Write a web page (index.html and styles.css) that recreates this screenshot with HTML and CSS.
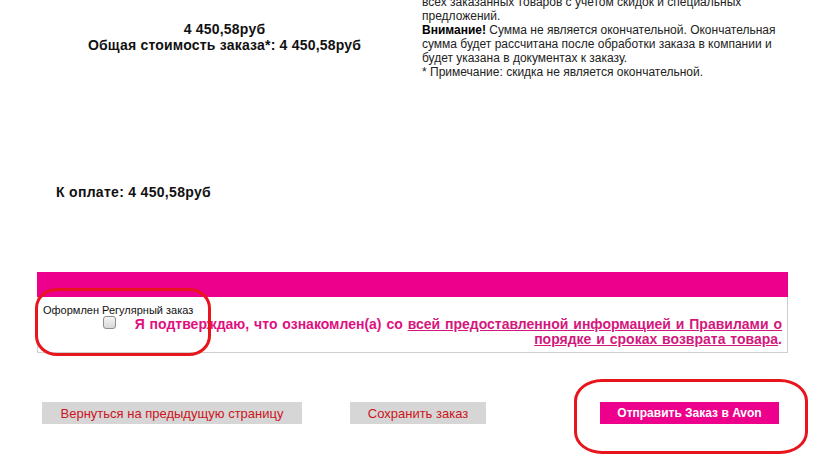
FILE: index.html
```html
<!DOCTYPE html>
<html lang="ru">
<head>
    <meta charset="UTF-8">
    <title>Оформление заказа</title>
    <link rel="stylesheet" href="styles.css">
</head>
<body>
    <div class="order">
        <div class="summary">
            <div class="summary-total">
                <div>4 450,58руб</div>
                <div>Общая стоимость заказа*: 4 450,58руб</div>
            </div>
            <div class="summary-note">
                всех заказанных товаров с учетом скидок и специальных предложений.<br>
                <b>Внимание!</b> Сумма не является окончательной. Окончательная сумма будет рассчитана после обработки заказа в компании и будет указана в документах к заказу.<br>
                * Примечание: скидка не является окончательной.
            </div>
        </div>

        <div class="to-pay">К оплате: 4 450,58руб</div>

        <div class="confirm-bar"></div>
        <div class="confirm-box">
            <div class="regular-label">Оформлен Регулярный заказ</div>
            <div class="confirm-row">
                <input type="checkbox" class="confirm-check" id="agree">
                <label for="agree" class="confirm-text">
                    Я подтверждаю, что ознакомлен(а) со <a href="#">всей предоставленной информацией и Правилами о порядке и сроках возврата товара</a>.
                </label>
            </div>
        </div>

        <div class="actions">
            <button class="btn btn-back">Вернуться на предыдущую страницу</button>
            <button class="btn btn-save">Сохранить заказ</button>
            <button class="btn btn-send">Отправить Заказ в Avon</button>
        </div>
    </div>

    <!-- red marker outlines drawn over the screenshot -->
    <div class="mark mark-regular"></div>
    <div class="mark mark-send"></div>
</body>
</html>
```

FILE: styles.css
```css
body {
    margin: 0;
    background: #fff;
    font-family: "Liberation Sans", Arial, sans-serif;
    color: #111;
    overflow: hidden;
}

.order {
    margin-left: 37px;
    width: 751px;
}

.summary {
    display: flex;
    align-items: center;
    margin-top: -5px;
}

.summary-total {
    width: 375px;
    text-align: center;
    font-size: 14px;
    line-height: 16px;
    font-weight: bold;
    letter-spacing: 0.2px;
}

.summary-note {
    width: 362px;
    padding-left: 10px;
    font-size: 12px;
    line-height: 14px;
    color: #222;
}

.summary-note b {
    color: #000;
}

.to-pay {
    margin-top: 105px;
    padding-left: 19px;
    font-size: 14px;
    line-height: 16px;
    font-weight: bold;
    letter-spacing: 0.3px;
}

.confirm-bar {
    margin-top: 72px;
    height: 25px;
    background: #ec008c;
}

.confirm-box {
    border: 1px solid #cfcfcf;
    border-top: none;
    padding: 7px 5px 5px 5px;
}

.regular-label {
    font-size: 11px;
    line-height: 13px;
    color: #111;
}

.confirm-row {
    display: flex;
    align-items: flex-start;
    padding-left: 60px;
}

.confirm-check {
    appearance: none;
    width: 13px;
    height: 13px;
    margin: -1px 12px 0 0;
    border: 1px solid #8f8f8f;
    border-radius: 3px;
    background: linear-gradient(#f4f4f4, #d8d8d8);
    flex-shrink: 0;
}

.confirm-text {
    flex: 1;
    text-align: right;
    font-size: 14px;
    line-height: 15px;
    font-weight: bold;
    word-spacing: 1px;
    color: #e0107f;
}

.confirm-text a {
    color: #d4177d;
}

.actions {
    display: flex;
    margin-top: 49px;
    padding-left: 5px;
}

.btn {
    height: 22px;
    border: none;
    padding: 0;
    font-family: inherit;
    font-size: 13px;
    cursor: pointer;
}

.btn-back,
.btn-save {
    background: #d6d6d6;
    color: #cc1420;
}

.btn-back {
    width: 260px;
}

.btn-save {
    width: 136px;
    margin-left: 48px;
}

.btn-send {
    width: 179px;
    margin-left: 114px;
    background: #ec008c;
    color: #fff;
    font-size: 12px;
    font-weight: bold;
}

.mark {
    position: absolute;
    border: 3px solid #e8151d;
}

.mark-regular {
    left: 35px;
    top: 288px;
    width: 170px;
    height: 62px;
    border-radius: 22px / 20px;
}

.mark-send {
    left: 574px;
    top: 379px;
    width: 228px;
    height: 69px;
    border-radius: 28px / 22px;
}
```
